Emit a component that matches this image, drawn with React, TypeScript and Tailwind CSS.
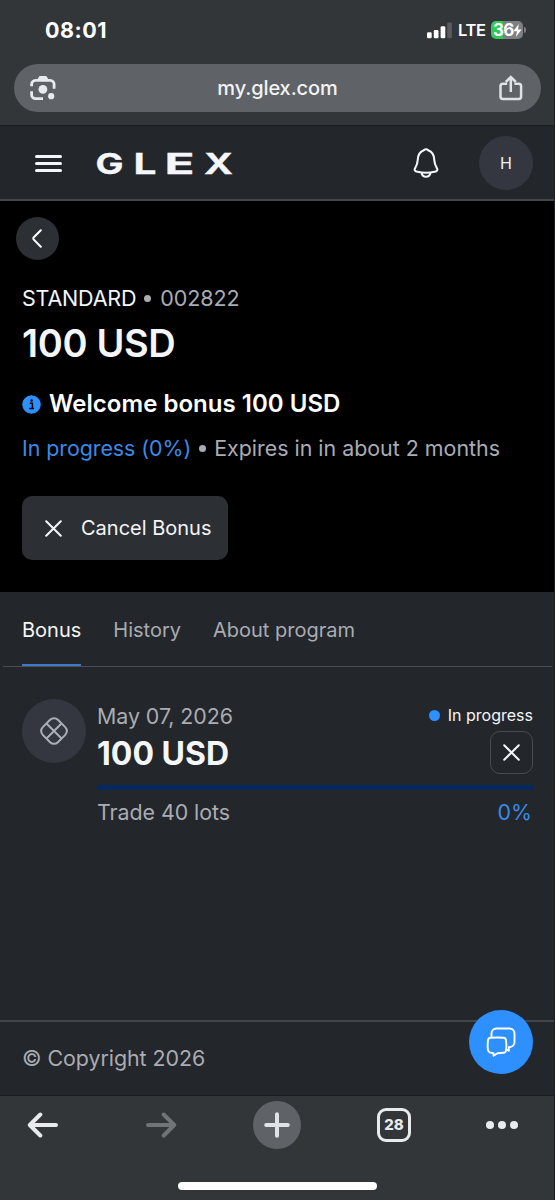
import { ReactNode } from "react";

const tabs = [
    { name: "Bonus", active: true },
    { name: "History", active: false },
    { name: "About program", active: false },
];

function StatusBar() {
    return (
        <div className="flex h-[64px] items-start justify-between pl-[45px] pr-[28px] pt-[15px] text-white">
            <span className="text-[21.5px] font-bold leading-[30px] tracking-[0.5px]">
                08:01
            </span>
            <div className="flex h-[30px] items-center">
                <svg width="26" height="18" viewBox="0 0 26 18" fill="#fff">
                    <rect x="0" y="11.3" width="4.7" height="6" rx="1.3" />
                    <rect x="6.8" y="9" width="4.7" height="8.3" rx="1.3" />
                    <rect x="13.6" y="5.2" width="4.7" height="12.1" rx="1.3" />
                    <rect x="20.2" y="1.500" width="4.7" height="15.8" rx="1.3" fill="#5a5d5f" />
                </svg>
                <span className="ml-[5px] w-[27px] text-[16.5px] font-semibold leading-[30px] tracking-[-0.4px]">
                    LTE
                </span>
                <div className="ml-[6px] flex h-[18px] w-[32px] items-center rounded-[5px] bg-linear-to-r from-[#34c759] from-[38%] to-[#7d8082] to-[38%] pl-[2px]">
                    <span className="text-[17px] font-bold leading-[18px] tracking-[-0.8px]">
                        36
                    </span>
                    <svg width="9" height="13" viewBox="0 0 9 13" fill="#fff">
                        <path d="M5.8 0 0.4 7.2H4L2.8 13 8.6 5.4H5z" />
                    </svg>
                </div>
                <div className="ml-[1px] h-[6px] w-[2px] rounded-r-full bg-[#7d8082]" />
            </div>
        </div>
    );
}

function AddressBar() {
    return (
        <div className="ml-[14px] mr-[13px] flex h-[48px] items-center justify-between rounded-full bg-[#5f6367] pl-[16px] pr-[18px]">
            <svg width="26" height="26" viewBox="0 0 26 26" fill="none" stroke="#e8eaed" strokeWidth="2.8">
                <path d="M1.6 11.2V9.4a4 4 0 0 1 4-4h14.5a4 4 0 0 1 4 4v4.4" />
                <path d="M1.6 16.2v3.4a4 4 0 0 0 4 4h7.4" />
                <path d="M7 5.4 8.6 2.2a2 2 0 0 1 1.8-1.1h5a2 2 0 0 1 1.8 1.1l1.6 3.2z" fill="#e8eaed" stroke="none" />
                <circle cx="12.9" cy="14.3" r="4.4" fill="#e8eaed" stroke="none" />
                <circle cx="21.2" cy="21.2" r="3.1" fill="#e8eaed" stroke="none" />
            </svg>
            <span className="text-[20px] font-medium leading-[46px] tracking-[-0.1px] text-[#f1f3f4]">
                my.glex.com
            </span>
            <svg width="24" height="26" viewBox="0 0 24 26" fill="none" stroke="#e0e3e6" strokeWidth="2.5">
                <path d="M8.2 8.7H4a2.500 2.500 0 0 0-2.500 2.500v10.4A2.500 2.500 0 0 0 4 24.1h15.6a2.500 2.500 0 0 0 2.500-2.500V11.2a2.500 2.500 0 0 0-2.500-2.500h-4.2" />
                <path d="M11.8 17V2.2M6.8 7l5-5 5 5" />
            </svg>
        </div>
    );
}

function Header() {
    return (
        <header className="flex h-[76px] items-center border-b-2 border-t border-b-[#42474c] border-t-[#1a1d1f] bg-[#23262b] pl-[35px] pr-[21px]">
            <div className="mt-[1px] flex flex-col gap-[4px]">
                <div className="h-[3px] w-[27px] rounded-full bg-[#f4f6f9]" />
                <div className="h-[3px] w-[27px] rounded-full bg-[#f4f6f9]" />
                <div className="h-[3px] w-[27px] rounded-full bg-[#f4f6f9]" />
            </div>
            <svg width="150" height="50" viewBox="-5 -10 150 50" className="ml-[29px] font-[Inter] text-[28.5px] font-bold" fill="#f4f6f9" stroke="#f4f6f9" strokeWidth="0.3">
                <text y="25.8">
                    <tspan x="-0.5" textLength="28" lengthAdjust="spacingAndGlyphs">G</tspan>
                    <tspan x="37.5" textLength="23" lengthAdjust="spacingAndGlyphs">L</tspan>
                    <tspan x="68.5" textLength="30" lengthAdjust="spacingAndGlyphs">E</tspan>
                    <tspan x="108" textLength="29" lengthAdjust="spacingAndGlyphs">X</tspan>
                </text>
            </svg>
            <svg width="26" height="30" viewBox="0 0 26 30" fill="none" stroke="#f4f6f9" strokeWidth="2.1" strokeLinejoin="round" className="ml-auto">
                <path d="M10.8 2.3a3.2 3.2 0 0 1 4.4 0C19.2 3.8 21 7 21.2 11.5c.2 4 .8 5.5 2.7 8.7 1.2 2-.2 3.2-2.3 3.6-5 1.1-12.2 1.1-17.2 0-2.1-.4-3.5-1.6-2.3-3.6 1.9-3.2 2.5-4.7 2.7-8.7C5 7 6.800 3.800 10.800 2.300z" />
                <path d="M8.5 25c.6 2.4 2.3 3.8 4.5 3.8s3.9-1.4 4.5-3.8" />
            </svg>
            <div className="ml-[40px] flex size-[54px] items-center justify-center rounded-full bg-[#343740] text-[16px] text-[#f0f2f5]">
                H
            </div>
        </header>
    );
}

function CloseIcon({ size }: { size: number }) {
    return (
        <svg width={size} height={size} viewBox="0 0 17 17" stroke="#f4f6f9" strokeWidth="2" strokeLinecap="round">
            <path d="M1.2 1.2 15.8 15.8M15.8 1.2 1.2 15.8" />
        </svg>
    );
}

function Dot() {
    return <span className="size-[7px] shrink-0 rounded-full bg-[#a9acb3]" />;
}

function Summary() {
    return (
        <section className="h-[391px] bg-black pl-[16px] pt-[16px]">
            <button className="flex size-[43px] items-center justify-center rounded-full bg-[#2c2f34] pr-[2px]">
                <svg width="10" height="19" viewBox="0 0 10 19" fill="none" stroke="#fff" strokeWidth="2" strokeLinecap="round" strokeLinejoin="round">
                    <path d="M8.8 1.2 1.8 8.3a1.6 1.6 0 0 0 0 2.3l7 7.2" />
                </svg>
            </button>
            <div className="pl-[6px]">
                <p className="mt-[23px] flex items-center gap-[9px] text-[21.5px] leading-[30px]">
                    <span className="-mr-[1px] tracking-[-0.2px] text-[#f4f6f9]">STANDARD</span>
                    <Dot />
                    <span className="tracking-[-0.1px] text-[#a9acb3]">002822</span>
                </p>
                <h1 className="mt-[7px] text-[38px] font-semibold leading-[46px] tracking-[-0.35px] text-[#f4f6f9]">
                    100 USD
                </h1>
                <div className="mt-[23px] flex h-[30px] items-center">
                    <svg width="19" height="19" viewBox="0 0 19 19" className="mr-[8px]">
                        <circle cx="9.5" cy="9.5" r="9.3" fill="#2e90ff" />
                        <path d="M7.8 8.3h2.6v5.2M7.3 13.6h4.7" stroke="#000" strokeWidth="1.5" fill="none" />
                        <circle cx="9.6" cy="5.5" r="1.2" />
                    </svg>
                    <h2 className="text-[24px] font-semibold tracking-[0.03px] text-white">
                        Welcome bonus 100 USD
                    </h2>
                </div>
                <p className="mt-[14px] flex items-center gap-[8px] text-[21.4px] leading-[30px] text-[#a9acb3]">
                    <span className="tracking-[-0.05px] text-[#3a89e9]">In progress (0%)</span>
                    <Dot />
                    <span>Expires in in about 2 months</span>
                </p>
                <button className="mt-[33px] flex h-[64px] w-[206px] items-center rounded-[10px] bg-[#2c2f34] pl-[23px] text-[20px] text-[#f4f6f9]">
                    <CloseIcon size={17} />
                    <span className="ml-[19px]">Cancel Bonus</span>
                </button>
            </div>
        </section>
    );
}

function BonusCard() {
    return (
        <div className="flex pl-[22px] pr-[21px] pt-[32px]">
            <div className="flex size-[64px] shrink-0 items-center justify-center rounded-full bg-[#343740]">
                <svg width="30" height="30" viewBox="0 0 30 30" fill="none" stroke="#a9b0b8" strokeWidth="2">
                    <rect x="4.3" y="4.3" width="21.4" height="21.4" rx="5.5" transform="rotate(45 15 15)" />
                    <path d="M7.5 7.5l15 15M22.5 7.5l-15 15" />
                </svg>
            </div>
            <div className="ml-[11px] flex-1">
                <div className="flex justify-between">
                    <div>
                        <p className="mt-[2px] text-[21.4px] leading-[30px] tracking-[-0.05px] text-[#a9acb3]">
                            May 07, 2026
                        </p>
                        <p className="mt-[2px] text-[32px] font-bold leading-[41px] text-[#f4f6f9]">
                            100 USD
                        </p>
                    </div>
                    <div className="flex flex-col items-end">
                        <div className="mt-[4px] flex items-center text-[16px] leading-[24px] text-[#f4f6f9]">
                            <span className="mr-[8px] size-[11px] rounded-full bg-[#2e90ff]" />
                            In progress
                        </div>
                        <button className="mt-[4px] flex size-[43px] items-center justify-center rounded-[10px] border-[1.5px] border-[#484b50]">
                            <CloseIcon size={17} />
                        </button>
                    </div>
                </div>
                <div className="mt-[11px] h-[5px] bg-[#03295f]" />
                <div className="mt-[7px] flex justify-between text-[21.4px] leading-[30px] tracking-[-0.05px]">
                    <span className="text-[#a9acb3]">Trade 40 lots</span>
                    <span className="pr-[1px] text-[#3a89e9]">0%</span>
                </div>
            </div>
        </div>
    );
}

function NavSlot({ children }: { children: ReactNode }) {
    return <div className="flex h-[48px] items-center justify-center">{children}</div>;
}

function BottomBar() {
    return (
        <nav className="h-[105px] border-t border-[#1a1d1f] bg-[#323639] pt-[5px]">
            <div className="grid grid-cols-[85px_151px_82px_152px_64px]">
                <NavSlot>
                    <svg width="32" height="26" viewBox="0 0 32 26" fill="none" stroke="#e8eaed" strokeWidth="4" strokeLinecap="round" strokeLinejoin="round">
                        <path d="M29 13H3M13.3 2.5 2.8 13l10.5 10.5" />
                    </svg>
                </NavSlot>
                <NavSlot>
                    <svg width="32" height="26" viewBox="0 0 32 26" fill="none" stroke="#717477" strokeWidth="4" strokeLinecap="round" strokeLinejoin="round">
                        <path d="M3 13h26M18.7 2.5 29.2 13 18.7 23.5" />
                    </svg>
                </NavSlot>
                <NavSlot>
                    <div className="flex size-[48px] items-center justify-center rounded-full bg-[#5f6367]">
                        <svg width="26" height="26" viewBox="0 0 26 26" stroke="#e0e3e6" strokeWidth="4" strokeLinecap="round">
                            <path d="M13 2.2v21.6M2.2 13h21.6" />
                        </svg>
                    </div>
                </NavSlot>
                <NavSlot>
                    <div className="flex size-[34px] items-center justify-center rounded-[9px] border-[3.5px] border-[#e8eaed] text-[15px] font-extrabold leading-[20px] text-[#e8eaed]">
                        28
                    </div>
                </NavSlot>
                <NavSlot>
                    <div className="flex gap-[4px]">
                        <span className="size-[8px] rounded-full bg-[#e8eaed]" />
                        <span className="size-[8px] rounded-full bg-[#e8eaed]" />
                        <span className="size-[8px] rounded-full bg-[#e8eaed]" />
                    </div>
                </NavSlot>
            </div>
            <div className="mx-auto mt-[33px] h-[8px] w-[199px] rounded-full bg-white" />
        </nav>
    );
}

export default function App() {
    return (
        <div className="relative flex h-[1200px] w-[555px] flex-col overflow-hidden border-r border-[#1b1d20] bg-[#23262a] font-[Inter,sans-serif]">
            <div className="h-[125px] bg-[#323639]">
                <StatusBar />
                <AddressBar />
            </div>
            <Header />
            <Summary />
            <div className="ml-[3px] mr-[2px] flex h-[75px] gap-[32px] border-b border-[#4a4d52] pl-[19px]">
                {tabs.map((tab) => (
                    <button
                        key={tab.name}
                        className={
                            tab.active
                                ? "h-[74px] border-b-2 border-[#4079cc] pt-[3px] text-[20px] text-[#f4f6f9]"
                                : "h-[74px] border-b-2 border-transparent pt-[3px] text-[20px] text-[#a9acb3]"
                        }>
                        {tab.name}
                    </button>
                ))}
            </div>
            <BonusCard />
            <footer className="mt-auto flex h-[75px] items-center border-t-2 border-[#42464b] pl-[22px] text-[21.4px] tracking-[-0.05px] text-[#a9acb3]">
                © Copyright 2026
            </footer>
            <BottomBar />
            {/* Floating chat button */}
            <button className="absolute left-[469px] top-[1010px] flex size-[64px] items-center justify-center rounded-full bg-[#2e90ff]">
                <svg width="30" height="30" viewBox="0 0 30 30" fill="none" stroke="#fff" strokeWidth="1.9" strokeLinejoin="round">
                    <path d="M5.5 10.5V6.5A5 5 0 0 1 10.5 1.5h13a5 5 0 0 1 5 5v8.5a5 5 0 0 1-4.5 5l-1.2.2v3.5l-2.6-1.2" />
                    <path d="M4.5 10.8q7.5-.7 13 0a2.8 2.8 0 0 1 2.5 2.5q.7 5.5 0 10a2.8 2.8 0 0 1-2.5 2.5q-3 .4-6 .4L7.5 28.8V26.2q-4.5 0-5.5-2.9-.7-4.500 0-10a2.800 2.800 0 0 1 2.500-2.500z" />
                </svg>
            </button>
        </div>
    );
}
